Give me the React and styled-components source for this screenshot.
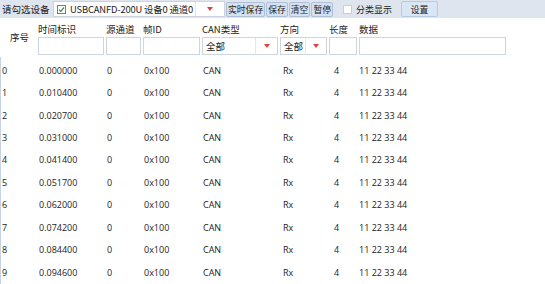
import React from 'react';
import styled, { createGlobalStyle } from 'styled-components';

const Global = createGlobalStyle`
  html, body { margin: 0; padding: 0; background: #fff; }
  body {
    font-family: "Noto Sans CJK SC", "Noto Sans", sans-serif;
    font-size: 9px;
    color: #222;
    overflow: hidden;
  }
`;

const Page = styled.div`
  width: 545px;
  height: 284px;
  display: flex;
  flex-direction: column;
  overflow: hidden;
`;

const Toolbar = styled.div`
  height: 18px;
  background: #dfe5ee;
  display: flex;
  align-items: center;
  padding-left: 2px;
  white-space: nowrap;
`;

const Label = styled.span`
  font-size: ${p => p.size || 9}px;
  width: ${p => (p.w ? `${p.w}px` : 'auto')};
  flex-shrink: 0;
  color: #222;
`;

const Combo = styled.div`
  width: 172px;
  height: 16px;
  box-sizing: border-box;
  background: #fff;
  border: 1px solid #ccd3de;
  display: flex;
  align-items: center;
  margin-right: 1px;
`;

const Check = styled.span`
  width: 7px;
  height: 7px;
  flex-shrink: 0;
  border: 1px solid ${p => (p.on ? '#6b8a5b' : '#c9ced6')};
  background: #fff;
  display: inline-flex;
  align-items: center;
  justify-content: center;
  margin: 0 4px 0 ${p => p.ml || 0}px;
`;

const ComboText = styled.span`
  flex: 1;
  font-size: 9.4px;
  letter-spacing: -0.15px;
  overflow: hidden;
`;

const Arrow = styled.span`
  width: ${p => p.w || 28}px;
  flex-shrink: 0;
  height: 100%;
  display: flex;
  align-items: center;
  justify-content: center;
  border-left: 1px solid #e4e8ee;
  &::after {
    content: '';
    border-left: 3px solid transparent;
    border-right: 3px solid transparent;
    border-top: 4px solid #e3423f;
  }
`;

const Btn = styled.span`
  height: 15px;
  box-sizing: border-box;
  padding: 0 1px;
  margin-right: 1px;
  background: #d5e1f1;
  border: 1px solid #aebfd8;
  border-radius: 2px;
  font-size: 8.8px;
  display: flex;
  align-items: center;
`;

const WideBtn = styled(Btn)`
  width: 37px;
  justify-content: center;
  margin-left: 9px;
  height: 16px;
  background: #d9e6f6;
  border-color: #b9cbe4;
`;

const Header = styled.div`
  height: 39px;
  display: flex;
  align-items: stretch;
`;

const Col = styled.div`
  width: ${p => p.w}px;
  margin-left: ${p => p.ml || 0}px;
  display: flex;
  flex-direction: column;
  justify-content: ${p => (p.center ? 'center' : 'flex-start')};
  padding-top: ${p => (p.center ? 0 : 4)}px;
  box-sizing: border-box;
`;

const ColLabel = styled.div`
  font-size: 9.5px;
  height: 15px;
  line-height: 15px;
  padding-left: ${p => p.pl || 0}px;
`;

const Field = styled.div`
  height: 18px;
  box-sizing: border-box;
  border: 1px solid #cdd5e1;
  background: #fff;
  display: flex;
  align-items: center;
  font-size: 9.5px;
`;

const FieldText = styled.span`
  flex: 1;
  padding-left: 3px;
`;

const Body = styled.div`
  flex: 1;
  border-left: 1px solid #c7d3e6;
  padding-top: 2px;
`;

const Row = styled.div`
  height: 22.45px;
  display: flex;
  align-items: center;
`;

const Cell = styled.div`
  width: ${p => p.w}px;
  padding-left: ${p => p.pl || 0}px;
  box-sizing: border-box;
  font-family: "Open Sans", "Noto Sans", sans-serif;
  font-size: 9px;
  white-space: nowrap;
  color: #222;
`;

const cols = [
  { w: 38, pl: 1 },
  { w: 68 },
  { w: 37 },
  { w: 59 },
  { w: 80 },
  { w: 49 },
  { w: 27, pl: 2 },
  { w: 180 },
];

const times = ['0.000000', '0.010400', '0.020700', '0.031000', '0.041400', '0.051700', '0.062000', '0.074200', '0.084400', '0.094600'];

const CheckMark = () => (
  <svg width="7" height="7" viewBox="0 0 7 7">
    <path d="M1 3.6 L2.8 5.3 L6 1.5" fill="none" stroke="#3f8a3a" strokeWidth="1.2" />
  </svg>
);

export default function App() {
  return (
    <Page>
      <Global />
      <Toolbar>
        <Label size={9.5} w={51}>请勾选设备</Label>
        <Combo>
          <Check on ml={3}><CheckMark /></Check>
          <ComboText>USBCANFD-200U 设备0 通道0</ComboText>
          <Arrow w={28} />
        </Combo>
        <Btn>实时保存</Btn>
        <Btn>保存</Btn>
        <Btn>清空</Btn>
        <Btn>暂停</Btn>
        <Check ml={9} />
        <Label>分类显示</Label>
        <WideBtn>设置</WideBtn>
      </Toolbar>
      <Header>
        <Col w={38} center>
          <ColLabel pl={10}>序号</ColLabel>
        </Col>
        <Col w={66}>
          <ColLabel>时间标识</ColLabel>
          <Field />
        </Col>
        <Col w={35} ml={2}>
          <ColLabel>源通道</ColLabel>
          <Field />
        </Col>
        <Col w={57} ml={2}>
          <ColLabel>帧ID</ColLabel>
          <Field />
        </Col>
        <Col w={76} ml={2}>
          <ColLabel>CAN类型</ColLabel>
          <Field>
            <FieldText>全部</FieldText>
            <Arrow w={21} />
          </Field>
        </Col>
        <Col w={47} ml={2}>
          <ColLabel>方向</ColLabel>
          <Field>
            <FieldText>全部</FieldText>
            <Arrow w={20} />
          </Field>
        </Col>
        <Col w={28} ml={2}>
          <ColLabel>长度</ColLabel>
          <Field />
        </Col>
        <Col w={147} ml={2}>
          <ColLabel>数据</ColLabel>
          <Field />
        </Col>
      </Header>
      <Body>
        {times.map((t, i) => {
          const vals = [i, t, '0', '0x100', 'CAN', 'Rx', '4', '11 22 33 44'];
          return (
            <Row key={i}>
              {vals.map((v, j) => (
                <Cell key={j} w={cols[j].w} pl={cols[j].pl}>{v}</Cell>
              ))}
            </Row>
          );
        })}
      </Body>
    </Page>
  );
}
